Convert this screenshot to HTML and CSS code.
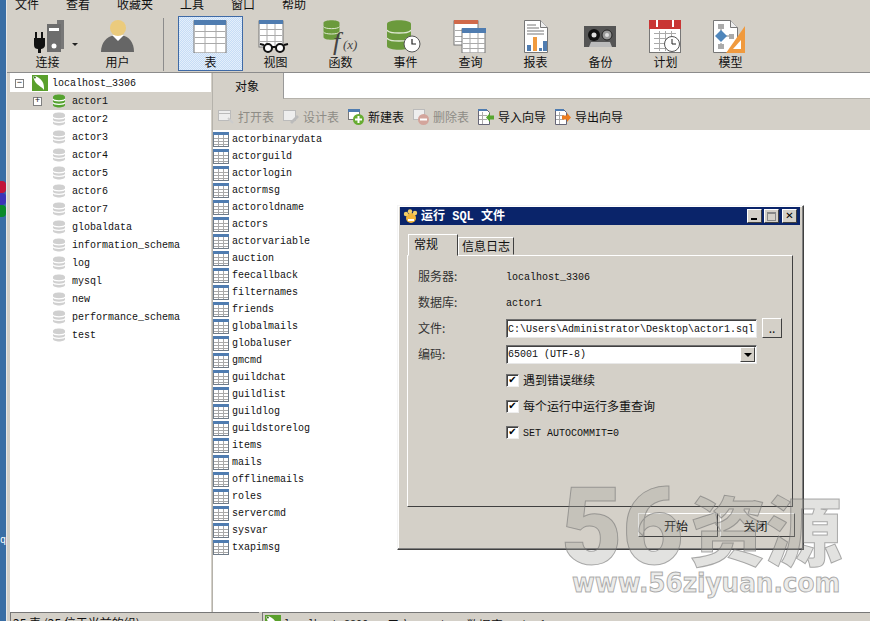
FILE: index.html
```html
<!DOCTYPE html>
<html lang="zh">
<head>
<meta charset="utf-8">
<title>Navicat</title>
<link rel="stylesheet" href="styles.css">
</head>
<body>
<svg class="sprite" aria-hidden="true">
  <defs>
    <symbol id="tbl" viewBox="0 0 16 15">
      <rect x=".5" y=".5" width="15" height="14" fill="#fff" stroke="#6f7b88"/>
      <rect x="0" y="0" width="16" height="3" fill="#4f7cb0"/>
      <path d="M1 6.500h14M1 9.500h14M1 12.500h14M5.500 3v11M10.500 3v11" stroke="#a9a9a9" fill="none"/>
    </symbol>
    <symbol id="db" viewBox="0 0 14 14">
      <path d="M1 3c0-3.300 12-3.300 12 0v8c0 3.300-12 3.300-12 0z" fill="currentColor"/>
      <path d="M1 5c1 2.400 11 2.400 12 0M1 8.500c1 2.400 11 2.400 12 0" stroke="#fff" stroke-width="1.200" fill="none"/>
    </symbol>
    <symbol id="conn" viewBox="0 0 16 16">
      <rect width="16" height="16" fill="#5aa02c"/>
      <path d="M1 1c4 0 7 2 9 5s2 5 2 9c-2-3-5-4-7-6S2 5 1 1z" fill="#fff"/>
      <path d="M1 1l3 1-1 2z" fill="#2d6b12"/>
    </symbol>
    <symbol id="dbbig" viewBox="0 0 24 30">
      <path d="M0 4c0-5 24-5 24 0v22c0 5-24 5-24 0z" fill="#6b9a3c"/>
      <path d="M0 10c2 4 22 4 24 0M0 18c2 4 22 4 24 0" stroke="#dfe8d2" stroke-width="1.500" fill="none"/>
    </symbol>
  </defs>
</svg>

<div class="screen">
  <aside class="strip">
    <span class="ball ball-red"></span>
    <span class="ball ball-blue"></span>
    <span class="ball ball-green"></span>
    <span class="strip-q">q</span>
  </aside>

  <div class="app">
    <nav class="menu">
      <span>文件</span><span>查看</span><span>收藏夹</span><span>工具</span><span>窗口</span><span>帮助</span>
    </nav>

    <header class="toolbar">
      <div class="tool tool-conn">
        <svg width="65" height="34" viewBox="0 0 65 34">
          <path d="M42 1h7v29h-7z" fill="#777"/>
          <path d="M32 5h14v28H32z" fill="#6d6d6d"/>
          <path d="M34 9h10v3H34z" fill="#fff"/>
          <circle cx="39" cy="27" r="2.500" fill="#fff"/>
          <path d="M20 13h2v6h4v-6h2v6h2v7c0 3-3 4-4 4v4h-3v-4c-2 0-4-1-4-4v-7h1z" fill="#111"/>
        </svg>
        <span class="tool-label">连接</span>
      </div>
      <span class="caret"></span>
      <div class="tool tool-user">
        <svg width="65" height="34" viewBox="0 0 65 34">
          <path d="M16 33c0-10 6-15 13-17h8c7 2 12 7 12 17z" fill="#666"/>
          <path d="M27 16l6 6 6-6z" fill="#fff"/>
          <circle cx="33" cy="9" r="8" fill="#ebcb7d"/>
        </svg>
        <span class="tool-label">用户</span>
      </div>
      <span class="tool-sep"></span>
      <div class="tool tool-active">
        <svg width="65" height="34" viewBox="0 0 65 34">
          <rect x="16" y="2" width="32" height="32" fill="#fff" stroke="#777"/>
          <rect x="16" y="1" width="32" height="5" fill="#4f7cb0"/>
          <path d="M17 12.500h30M17 18.500h30M17 24.500h30M27 6v28M38 6v28" stroke="#aaa" fill="none"/>
        </svg>
        <span class="tool-label">表</span>
      </div>
      <div class="tool">
        <svg width="65" height="34" viewBox="0 0 65 34">
          <rect x="16" y="2" width="24" height="26" fill="#fff" stroke="#777"/>
          <rect x="16" y="1" width="24" height="4" fill="#4f7cb0"/>
          <path d="M17 10.500h22M17 16.500h22M17 22.500h22M24 5v23M32 5v23" stroke="#aaa" fill="none"/>
          <circle cx="25" cy="29" r="4" fill="#fff" stroke="#111" stroke-width="2"/>
          <circle cx="37" cy="29" r="4" fill="#fff" stroke="#111" stroke-width="2"/>
          <path d="M17 25l4 1M29 28h4M41 26l4-1" stroke="#111" stroke-width="2" fill="none"/>
        </svg>
        <span class="tool-label">视图</span>
      </div>
      <div class="tool">
        <svg class="svg-open" width="65" height="34" viewBox="0 0 65 34">
          <use href="#dbbig" x="15" y="1" width="17" height="20"/>
          <text x="25" y="31" class="fx">f</text>
          <text x="35" y="30" class="fx-small">(x)</text>
        </svg>
        <span class="tool-label">函数</span>
      </div>
      <div class="tool">
        <svg width="65" height="34" viewBox="0 0 65 34">
          <use href="#dbbig" x="14" y="1" width="24" height="30"/>
          <circle cx="39" cy="25" r="8" fill="#fff" stroke="#555"/>
          <path d="M39 20v5h4" stroke="#222" stroke-width="1.200" fill="none"/>
        </svg>
        <span class="tool-label">事件</span>
      </div>
      <div class="tool">
        <svg width="65" height="34" viewBox="0 0 65 34">
          <rect x="16" y="2" width="24" height="24" fill="#fff" stroke="#777"/>
          <rect x="16" y="1" width="24" height="4" fill="#d0694a"/>
          <path d="M17 11.500h7M17 17.500h7M17 22.500h7" stroke="#aaa"/>
          <rect x="24" y="10" width="23" height="24" fill="#fff" stroke="#777"/>
          <rect x="24" y="9" width="24" height="5" fill="#4f7cb0"/>
          <path d="M25 19.500h22M25 24.500h22M25 29.500h22M32 14v20M40 14v20" stroke="#aaa" fill="none"/>
        </svg>
        <span class="tool-label">查询</span>
      </div>
      <div class="tool">
        <svg width="65" height="34" viewBox="0 0 65 34">
          <path d="M21.500 1.500h16l7 7v25h-23z" fill="#fff" stroke="#777"/>
          <path d="M37.500 1.500v7h7" fill="#eee" stroke="#777"/>
          <path d="M24 6h9M24 9h12M24 12h17M24 15h17" stroke="#777" fill="none"/>
          <rect x="24" y="26" width="4" height="6" fill="#4f7cb0"/>
          <rect x="30" y="18" width="4" height="14" fill="#f09a3e"/>
          <rect x="36" y="29" width="3" height="3" fill="#4f7cb0"/>
          <rect x="40" y="22" width="4" height="10" fill="#4f7cb0"/>
        </svg>
        <span class="tool-label">报表</span>
      </div>
      <div class="tool">
        <svg width="65" height="34" viewBox="0 0 65 34">
          <path d="M16 7h32v21H16z" fill="#555"/>
          <circle cx="26" cy="16" r="6" fill="#111"/><circle cx="26" cy="16" r="2.500" fill="#ddd"/>
          <circle cx="39" cy="16" r="5" fill="#999" stroke="#222"/><circle cx="39" cy="16" r="2" fill="#ddd"/>
          <path d="M21 28l2-5h19l2 5z" fill="#bbb"/>
        </svg>
        <span class="tool-label">备份</span>
      </div>
      <div class="tool">
        <svg width="65" height="34" viewBox="0 0 65 34">
          <rect x="16.500" y="2" width="31" height="31.500" fill="#fff" stroke="#777"/>
          <rect x="16" y="1" width="32" height="9" fill="#c93534"/>
          <rect x="23" y="1" width="2" height="7" fill="#fff"/>
          <rect x="39" y="1" width="2" height="7" fill="#fff"/>
          <path d="M21 14.500h22M21 19.500h22M21 24.500h22M21 29.500h22M26.500 12v20M32.500 12v20M38.500 12v20" stroke="#aaa" fill="none"/>
          <circle cx="39" cy="25" r="7.500" fill="#fff" stroke="#555"/>
          <path d="M39 20v5h4" stroke="#222" fill="none"/>
        </svg>
        <span class="tool-label">计划</span>
      </div>
      <div class="tool">
        <svg width="65" height="34" viewBox="0 0 65 34">
          <path d="M15.500 1.500h17l7 7v25h-24z" fill="#fff" stroke="#777"/>
          <path d="M32.500 1.500v7h7" fill="#eee" stroke="#777"/>
          <path d="M23 9v6M23 24v6M28 17h7" stroke="#888" fill="none"/>
          <rect x="20" y="5" width="6" height="5" fill="#aaa"/>
          <rect x="20" y="25" width="6" height="5" fill="#aaa"/>
          <rect x="31" y="15" width="5" height="5" fill="#aaa"/>
          <path d="M23 11l6 6-6 6-6-6z" fill="#4f86bb"/>
          <path d="M47 7v27H28z" fill="#f09a3e"/>
          <path d="M43 21v9h-8z" fill="#fff"/>
        </svg>
        <span class="tool-label">模型</span>
      </div>
    </header>

    <div class="workspace">
      <section class="tree">
        <div class="tree-row root">
          <span class="box">−</span>
          <svg class="tree-conn" width="16" height="16"><use href="#conn"/></svg>
          <span class="mono">localhost_3306</span>
        </div>
        <div class="tree-row selected">
          <span class="box box-inner">+</span>
          <svg class="tree-db green" width="14" height="14"><use href="#db"/></svg>
          <span class="mono">actor1</span>
        </div>
        <div class="tree-row child"><svg class="tree-db" width="14" height="14"><use href="#db"/></svg><span class="mono">actor2</span></div>
        <div class="tree-row child"><svg class="tree-db" width="14" height="14"><use href="#db"/></svg><span class="mono">actor3</span></div>
        <div class="tree-row child"><svg class="tree-db" width="14" height="14"><use href="#db"/></svg><span class="mono">actor4</span></div>
        <div class="tree-row child"><svg class="tree-db" width="14" height="14"><use href="#db"/></svg><span class="mono">actor5</span></div>
        <div class="tree-row child"><svg class="tree-db" width="14" height="14"><use href="#db"/></svg><span class="mono">actor6</span></div>
        <div class="tree-row child"><svg class="tree-db" width="14" height="14"><use href="#db"/></svg><span class="mono">actor7</span></div>
        <div class="tree-row child"><svg class="tree-db" width="14" height="14"><use href="#db"/></svg><span class="mono">globaldata</span></div>
        <div class="tree-row child"><svg class="tree-db" width="14" height="14"><use href="#db"/></svg><span class="mono">information_schema</span></div>
        <div class="tree-row child"><svg class="tree-db" width="14" height="14"><use href="#db"/></svg><span class="mono">log</span></div>
        <div class="tree-row child"><svg class="tree-db" width="14" height="14"><use href="#db"/></svg><span class="mono">mysql</span></div>
        <div class="tree-row child"><svg class="tree-db" width="14" height="14"><use href="#db"/></svg><span class="mono">new</span></div>
        <div class="tree-row child"><svg class="tree-db" width="14" height="14"><use href="#db"/></svg><span class="mono">performance_schema</span></div>
        <div class="tree-row child"><svg class="tree-db" width="14" height="14"><use href="#db"/></svg><span class="mono">test</span></div>
      </section>

      <section class="objects">
        <div class="tabs">
          <span class="tab">对象</span>
          <span class="tab-rest"></span>
        </div>
        <div class="actions">
          <span class="action off w65">
            <svg width="16" height="16" viewBox="0 0 16 16"><rect x=".5" y="1.500" width="12" height="10" fill="#eee" stroke="#bbb"/><path d="M1 4.500h11" stroke="#bbb"/><path d="M10 9l5 5" stroke="#ccc" stroke-width="2"/></svg>打开表</span>
          <span class="action off w65">
            <svg width="16" height="16" viewBox="0 0 16 16"><rect x=".5" y="1.500" width="12" height="10" fill="#eee" stroke="#bbb"/><path d="M7 13l7-7 2 2-7 7z" fill="#bbb"/></svg>设计表</span>
          <span class="action w65">
            <svg width="16" height="16" viewBox="0 0 16 16"><rect x=".5" y=".5" width="11" height="10" fill="#fff" stroke="#777"/><rect width="12" height="3" fill="#4f7cb0"/><circle cx="10.500" cy="10.500" r="5.500" fill="#67ac31"/><path d="M10.500 7v7M7 10.500h7" stroke="#fff" stroke-width="2"/></svg>新建表</span>
          <span class="action off w65">
            <svg width="16" height="16" viewBox="0 0 16 16"><rect x=".5" y=".5" width="11" height="10" fill="#eee" stroke="#bbb"/><circle cx="10.500" cy="10.500" r="5.500" fill="#d3a59c"/><path d="M7 10.500h7" stroke="#fff" stroke-width="2"/></svg>删除表</span>
          <span class="action w77">
            <svg width="16" height="16" viewBox="0 0 16 16"><path d="M.5.500h8l3 3v12H.5z" fill="#fff" stroke="#667"/><rect width="9" height="2" fill="#4f7cb0"/><path d="M1 6.500h8M1 10.500h8M4.500 3v12" stroke="#aaa"/><path d="M8 8.500l4-4.500v2.500h4v4h-4v2.500z" fill="#57a630"/></svg>导入向导</span>
          <span class="action w77">
            <svg width="16" height="16" viewBox="0 0 16 16"><path d="M.5.500h8l3 3v12H.5z" fill="#fff" stroke="#667"/><rect width="9" height="2" fill="#4f7cb0"/><path d="M1 6.500h8M1 10.500h8M4.500 3v12" stroke="#aaa"/><path d="M16 8.500l-4-4.500v2.500H7v4h5v2.500z" fill="#ee7e1f"/></svg>导出向导</span>
        </div>
        <div class="table-list">
          <div class="table-row"><svg width="16" height="15"><use href="#tbl"/></svg><span class="mono">actorbinarydata</span></div>
          <div class="table-row"><svg width="16" height="15"><use href="#tbl"/></svg><span class="mono">actorguild</span></div>
          <div class="table-row"><svg width="16" height="15"><use href="#tbl"/></svg><span class="mono">actorlogin</span></div>
          <div class="table-row"><svg width="16" height="15"><use href="#tbl"/></svg><span class="mono">actormsg</span></div>
          <div class="table-row"><svg width="16" height="15"><use href="#tbl"/></svg><span class="mono">actoroldname</span></div>
          <div class="table-row"><svg width="16" height="15"><use href="#tbl"/></svg><span class="mono">actors</span></div>
          <div class="table-row"><svg width="16" height="15"><use href="#tbl"/></svg><span class="mono">actorvariable</span></div>
          <div class="table-row"><svg width="16" height="15"><use href="#tbl"/></svg><span class="mono">auction</span></div>
          <div class="table-row"><svg width="16" height="15"><use href="#tbl"/></svg><span class="mono">feecallback</span></div>
          <div class="table-row"><svg width="16" height="15"><use href="#tbl"/></svg><span class="mono">filternames</span></div>
          <div class="table-row"><svg width="16" height="15"><use href="#tbl"/></svg><span class="mono">friends</span></div>
          <div class="table-row"><svg width="16" height="15"><use href="#tbl"/></svg><span class="mono">globalmails</span></div>
          <div class="table-row"><svg width="16" height="15"><use href="#tbl"/></svg><span class="mono">globaluser</span></div>
          <div class="table-row"><svg width="16" height="15"><use href="#tbl"/></svg><span class="mono">gmcmd</span></div>
          <div class="table-row"><svg width="16" height="15"><use href="#tbl"/></svg><span class="mono">guildchat</span></div>
          <div class="table-row"><svg width="16" height="15"><use href="#tbl"/></svg><span class="mono">guildlist</span></div>
          <div class="table-row"><svg width="16" height="15"><use href="#tbl"/></svg><span class="mono">guildlog</span></div>
          <div class="table-row"><svg width="16" height="15"><use href="#tbl"/></svg><span class="mono">guildstorelog</span></div>
          <div class="table-row"><svg width="16" height="15"><use href="#tbl"/></svg><span class="mono">items</span></div>
          <div class="table-row"><svg width="16" height="15"><use href="#tbl"/></svg><span class="mono">mails</span></div>
          <div class="table-row"><svg width="16" height="15"><use href="#tbl"/></svg><span class="mono">offlinemails</span></div>
          <div class="table-row"><svg width="16" height="15"><use href="#tbl"/></svg><span class="mono">roles</span></div>
          <div class="table-row"><svg width="16" height="15"><use href="#tbl"/></svg><span class="mono">servercmd</span></div>
          <div class="table-row"><svg width="16" height="15"><use href="#tbl"/></svg><span class="mono">sysvar</span></div>
          <div class="table-row"><svg width="16" height="15"><use href="#tbl"/></svg><span class="mono">txapimsg</span></div>
        </div>
      </section>
    </div>

    <footer class="status">
      <div class="status-left">25 表 (25 位于当前的组)</div>
      <div class="status-right">
        <svg width="16" height="16"><use href="#conn"/></svg>
        <span class="mono st-host">localhost_3306</span>
        <span class="st-user">用户:</span><span class="mono st-root">root</span>
        <span class="st-db">数据库:</span><span class="mono">actor1</span>
      </div>
    </footer>
  </div>

  <div class="dialog">
    <div class="titlebar">
      <svg width="16" height="15" viewBox="0 0 16 15">
        <circle cx="8" cy="9" r="5" fill="#f3b63a"/>
        <circle cx="3" cy="5" r="2.200" fill="#f3cf6a"/><circle cx="7" cy="2.500" r="2.200" fill="#f3cf6a"/><circle cx="12" cy="4" r="2.200" fill="#f3cf6a"/>
        <path d="M5 10h6v2H5z" fill="#fff"/>
      </svg>
      <span class="title-text">运行<b class="title-mono"> SQL </b>文件</span>
      <div class="win-btns">
        <span class="win-btn"><i class="glyph-min"></i></span>
        <span class="win-btn"><i class="glyph-max"></i></span>
        <span class="win-btn win-close">✕</span>
      </div>
    </div>
    <div class="dlg-tabs">
      <span class="dlg-tab on">常规</span>
      <span class="dlg-tab">信息日志</span>
    </div>
    <div class="dlg-panel">
      <div class="frow"><span class="flabel">服务器:</span><span class="mono">localhost_3306</span></div>
      <div class="frow"><span class="flabel">数据库:</span><span class="mono">actor1</span></div>
      <div class="frow">
        <span class="flabel">文件:</span>
        <span class="field mono">C:\Users\Administrator\Desktop\actor1.sql</span>
        <span class="browse">..</span>
      </div>
      <div class="frow">
        <span class="flabel">编码:</span>
        <span class="field field-select mono">65001 (UTF-8)<span class="drop"></span></span>
      </div>
      <div class="frow frow-check"><span class="check">✔</span><span>遇到错误继续</span></div>
      <div class="frow frow-check"><span class="check">✔</span><span>每个运行中运行多重查询</span></div>
      <div class="frow frow-check"><span class="check">✔</span><span class="mono">SET AUTOCOMMIT=0</span></div>
    </div>
    <div class="dlg-actions">
      <span class="dlg-btn btn-start">开始</span>
      <span class="dlg-btn btn-close">关闭</span>
    </div>
  </div>

  <div class="watermark">
    <div class="wm-big"><span class="wm-num">56</span><span class="wm-cjk">资源</span></div>
    <div class="wm-url">www.56ziyuan.com</div>
  </div>
</div>
</body>
</html>
```

FILE: styles.css
```css
* { box-sizing: border-box; }
html, body { margin: 0; padding: 0; }
body {
  width: 870px;
  height: 621px;
  overflow: hidden;
  background: #d4d0c8;
  color: #111;
  font-family: "Noto Sans CJK SC", "Liberation Sans", sans-serif;
  font-size: 12px;
  line-height: 16px;
}
.sprite { position: absolute; width: 0; height: 0; }
.mono { font-family: "Liberation Mono", "DejaVu Sans Mono", monospace; font-size: 10px; color: #111; white-space: pre; }

.screen { position: relative; display: flex; width: 870px; height: 621px; overflow: hidden; }

/* desktop sliver on the left */
.strip {
  display: flex;
  flex-direction: column;
  width: 7px;
  flex: none;
  padding-top: 181px;
  background: #3a6ea5;
  border-right: 1px solid #e8e8e8;
}
.ball { display: block; height: 12px; width: 6px; border-radius: 0 4px 4px 0; }
.ball-red { background: #c2143a; }
.ball-blue { background: #3c32b8; }
.ball-green { background: #0b8a2a; }
.strip-q { margin-top: 318px; color: #fff; font: 10px/12px "Liberation Mono", monospace; }

.app { display: flex; flex-direction: column; flex: 1; min-width: 0; }

/* menu */
.menu { display: flex; gap: 27px; height: 8px; padding-left: 8px; line-height: 8px; }
.menu span { white-space: nowrap; }

/* toolbar */
.toolbar {
  display: flex;
  align-items: flex-start;
  height: 65px;
  padding: 8px 0 0 8px;
  border-bottom: 1px solid #8c8c8c;
}
.tool {
  display: flex;
  flex-direction: column;
  align-items: center;
  width: 65px;
  height: 55px;
  flex: none;
  padding-top: 2px;
  border: 1px solid transparent;
}
.tool svg { display: block; flex: none; margin: 0 -1px; }
.svg-open { overflow: visible; }
.fx { font: italic 26px "Liberation Serif", serif; fill: #444; }
.fx-small { font: italic 13px "Liberation Serif", serif; fill: #444; }
.tool-label { margin-top: 1px; line-height: 16px; }
.tool-user { margin-left: 7px; }
.tool-active {
  border-color: #3f6aa6;
  background: repeating-conic-gradient(#c6dcf6 0 25%, #e4effb 0 50%) 0 0 / 2px 2px;
}
.caret {
  width: 0;
  height: 0;
  margin: 27px 0 0 -8px;
  border-left: 3px solid transparent;
  border-right: 3px solid transparent;
  border-top: 3px solid #222;
}
.tool-sep { width: 1px; height: 53px; margin: 2px 14px 0 13px; background: #8c8c8c; flex: none; }

/* workspace */
.workspace { display: flex; flex: 1; min-height: 0; }

.tree {
  width: 201px;
  margin-left: 3px;
  flex: none;
  padding-top: 1px;
  background: #fff;
}
.tree-row { display: flex; align-items: center; height: 18px; position: relative; }
.tree-row.selected { background: #d4d0c8; }
.root { padding-left: 5px; }
.selected { padding-left: 23px; }
.child { padding-left: 42px; }
.box {
  display: flex;
  align-items: center;
  justify-content: center;
  width: 9px;
  height: 9px;
  flex: none;
  border: 1px solid #808080;
  background: #fff;
  font: 9px/7px "Liberation Mono", monospace;
}
.tree-conn { margin-left: 8px; flex: none; }
.tree-db { color: #d0d0d0; flex: none; }
.tree-db.green { color: #56a230; margin-left: 10px; }
.tree-row .mono { margin-left: 6px; padding-top: 2px; }
.root .mono { margin-left: 4px; }

.objects {
  display: flex;
  flex-direction: column;
  flex: 1;
  min-width: 0;
  margin-left: 1px;
  border-left: 1px solid #b5b2ab;
}
.tabs { display: flex; height: 27px; flex: none; }
.tab {
  width: 70px;
  flex: none;
  padding-top: 5px;
  text-align: center;
  padding-right: 2px;
  font-size: 12px;
}
.tab-rest { flex: 1; height: 26px; background: #fff; border-left: 1px solid #999; border-bottom: 1px solid #b5b2ab; }
.actions { display: flex; align-items: center; height: 30px; flex: none; padding: 4px 0 0 5px; }
.action { display: flex; align-items: center; gap: 4px; white-space: nowrap; }
.action svg { flex: none; }
.w65 { width: 65px; }
.w77 { width: 77px; }
.off { color: #8e8c86; }

.table-list { flex: 1; padding-top: 1px; background: #fff; }
.table-row { display: flex; align-items: center; gap: 3px; height: 17px; }
.table-row svg { flex: none; display: block; }

/* status */
.status { display: flex; height: 9px; flex: none; margin-top: 0; background: #d4d0c8; }
.status-left {
  width: 249px;
  margin-left: 3px;
  height: 20px;
  padding: 2px 0 0 2px;
  border-top: 1px solid #777;
  border-left: 1px solid #777;
  font-size: 12px;
  line-height: 16px;
  white-space: nowrap;
}
.status-right {
  display: flex;
  align-items: flex-start;
  flex: 1;
  height: 20px;
  margin-left: 3px;
  padding: 2px 0 0 2px;
  border-top: 1px solid #777;
  border-left: 1px solid #777;
  white-space: nowrap;
  line-height: 16px;
}
.st-host { margin-left: 3px; }
.status-right .mono { line-height: 20px; }
.st-user { margin-left: 19px; padding-top: 2px; }
.st-root { margin-left: 8px; }
.st-db { margin-left: 20px; margin-right: 4px; padding-top: 2px; }

/* dialog window */
.dialog {
  position: absolute;
  left: 397px;
  top: 205px;
  width: 407px;
  height: 345px;
  display: flex;
  flex-direction: column;
  padding: 1px 3px 0 2px;
  background: #d4d0c8;
  border: 1px solid;
  border-color: #f4f4f4 #404040 #404040 #f4f4f4;
  box-shadow: inset -1px -1px 0 #808080, inset 1px 1px 0 #fff;
}
.titlebar {
  display: flex;
  align-items: center;
  gap: 2px;
  height: 18px;
  flex: none;
  padding: 0 3px 0 3px;
  background: #0a246a;
  color: #fff;
}
.title-text { font-weight: 700; font-size: 12px; white-space: pre; }
.title-mono { font-family: "Liberation Mono", monospace; font-size: 12px; }
.win-btns { display: flex; gap: 2px; margin-left: auto; }
.win-btn {
  display: flex;
  align-items: center;
  justify-content: center;
  width: 15px;
  height: 14px;
  background: #d4d0c8;
  border: 1px solid;
  border-color: #fff #404040 #404040 #fff;
  color: #000;
  font-size: 10px;
  font-weight: 700;
  line-height: 12px;
}
.win-close { margin-left: 1px; font-family: "DejaVu Sans", sans-serif; }
.glyph-min { display: block; width: 6px; height: 2px; margin-top: 6px; margin-right: 2px; background: #000; }
.glyph-max { display: block; width: 9px; height: 9px; border: 1px solid #888; border-top-width: 2px; }

.dlg-tabs { display: flex; align-items: flex-end; height: 30px; flex: none; padding-left: 8px; }
.dlg-tab {
  height: 18px;
  padding: 0 3px;
  border: 1px solid;
  border-color: #fff #404040 transparent #fff;
  line-height: 16px;
  white-space: nowrap;
  color: #111;
}
.dlg-tab.on {
  position: relative;
  width: 50px;
  height: 22px;
  margin-bottom: -1px;
  padding: 0 0 0 5px;
  background: #d4d0c8;
  line-height: 18px;
  z-index: 1;
}
.dlg-panel {
  display: flex;
  flex-direction: column;
  height: 252px;
  flex: none;
  margin: 0 7px 0 7px;
  padding: 7px 0 0 10px;
  border: 1px solid;
  border-color: #fff #404040 #404040 #fff;
}
.frow { display: flex; align-items: center; height: 26px; flex: none; }
.frow > .mono { padding-top: 4px; }
.flabel { width: 88px; flex: none; color: #333; }
.frow > .field {
  display: flex;
  align-items: center;
  width: 251px;
  height: 19px;
  padding: 3px 0 0 1px;
  background: #fff;
  border: 1px solid;
  border-color: #707070 #e8e8e8 #e8e8e8 #707070;
  box-shadow: inset 1px 1px 0 #404040;
  overflow: hidden;
}
.frow > .field-select { position: relative; padding-top: 2px; }
.drop {
  position: absolute;
  right: 1px;
  top: 1px;
  width: 15px;
  height: 15px;
  background: #d4d0c8;
  border: 1px solid;
  border-color: #fff #404040 #404040 #fff;
}
.drop::after {
  content: "";
  position: absolute;
  left: 3px;
  top: 5px;
  border-left: 4px solid transparent;
  border-right: 4px solid transparent;
  border-top: 4px solid #000;
}
.browse {
  width: 20px;
  height: 20px;
  margin-left: 5px;
  flex: none;
  text-align: center;
  border: 1px solid;
  border-color: #fff #404040 #404040 #fff;
  line-height: 18px;
}
.frow-check { padding-left: 88px; gap: 4px; }
.check {
  display: flex;
  align-items: center;
  justify-content: center;
  width: 13px;
  height: 13px;
  flex: none;
  background: #fff;
  border: 1px solid;
  border-color: #707070 #eee #eee #707070;
  box-shadow: inset 1px 1px 0 #404040;
  font: 700 10px/10px "DejaVu Sans", sans-serif;
  color: #000;
}
.dlg-actions { display: flex; gap: 2px; justify-content: flex-end; padding: 6px 5px 0 0; }
.dlg-btn {
  height: 24px;
  padding-right: 4px;
  text-align: center;
  border: 1px solid;
  border-color: #fff #404040 #404040 #fff;
  line-height: 23px;
}
.btn-start { width: 80px; }
.btn-close { width: 75px; }

/* watermark */
.watermark { position: absolute; left: 561px; top: 480px; width: 285px; pointer-events: none; }
.wm-big { display: flex; align-items: center; height: 94px; }
.wm-num {
  font: 900 108px/94px "Roboto", "DejaVu Sans", sans-serif;
  width: 129px;
  flex: none;
  white-space: nowrap;
  color: rgba(165, 165, 160, .32);
  -webkit-text-stroke: 1px rgba(110, 110, 110, .55);
  transform: scaleX(.98);
  transform-origin: left center;
}
.wm-cjk {
  font: 900 76px/94px "Noto Sans CJK SC", sans-serif;
  white-space: nowrap;
  color: rgba(165, 165, 160, .32);
  -webkit-text-stroke: 1px rgba(110, 110, 110, .55);
}
.wm-url {
  font: 700 26px/28px "DejaVu Sans", sans-serif;
  margin-top: -5px;
  margin-left: 11px;
  width: 300px;
  white-space: nowrap;
  color: rgba(200, 200, 196, .35);
  -webkit-text-stroke: 1px rgba(120, 120, 120, .6);
  transform: scaleX(.95);
  transform-origin: left center;
}
```
